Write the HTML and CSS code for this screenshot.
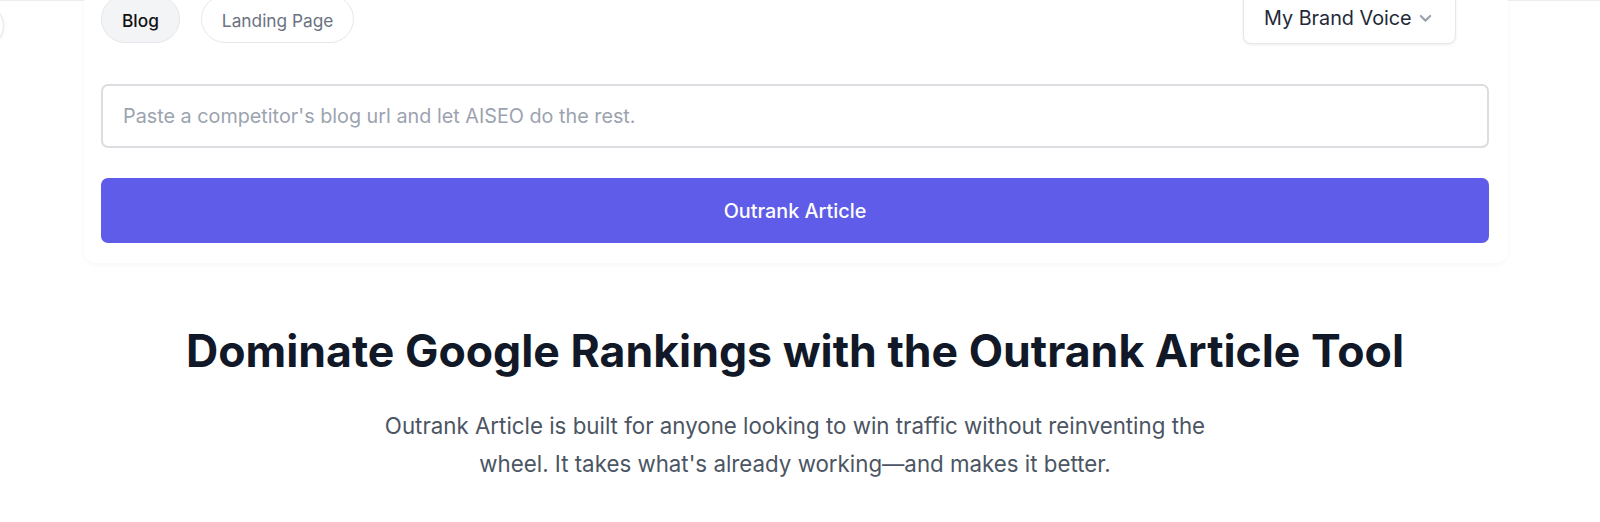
FILE: index.html
```html
<!DOCTYPE html>
<html lang="en">
<head>
<meta charset="utf-8">
<title>Outrank Article</title>
<link rel="stylesheet" href="styles.css">
</head>
<body>
<div class="page">
  <div class="side-btn"></div>
  <section class="card">
    <div class="tabs-row">
      <div class="tabs">
        <button class="pill pill-active">Blog</button>
        <button class="pill">Landing Page</button>
      </div>
      <button class="brand">
        <span>My Brand Voice</span>
        <svg class="chev" width="13" height="9" viewBox="0 0 13 9"><path d="M1.8 2 L6.5 6.6 L11.2 2" fill="none" stroke="#9ca3af" stroke-width="2.2" stroke-linecap="round" stroke-linejoin="round"/></svg>
      </button>
    </div>
    <div class="url-input">Paste a competitor's blog url and let AISEO do the rest.</div>
    <button class="cta">Outrank Article</button>
  </section>
  <section class="intro">
    <h1>Dominate Google Rankings with the Outrank Article Tool</h1>
    <p>Outrank Article is built for anyone looking to win traffic without reinventing the wheel. It takes what's already working—and makes it better.</p>
  </section>
</div>
</body>
</html>
```

FILE: styles.css
```css
* { box-sizing: border-box; }
html, body { margin: 0; padding: 0; background: #fff; }
body {
  font-family: Inter, "Noto Sans", sans-serif;
  color: #111827;
  width: 1600px;
  height: 522px;
  overflow: hidden;
}
.page {
  position: relative;
  border-top: 1px solid #ececee;
}
.side-btn {
  position: absolute;
  left: -38px;
  top: 4px;
  width: 42px;
  height: 42px;
  border-radius: 50%;
  background: #fff;
  border: 1px solid #e5e7eb;
  box-shadow: 0 1px 4px rgba(0,0,0,0.06);
}
.card {
  margin: -11px 0 0 84px;
  width: 1424px;
  padding: 0 19px 20px 17px;
  border-radius: 12px;
  background: #fff;
  box-shadow: 0 2px 6px rgba(0,0,0,0.035);
}
.tabs-row {
  display: flex;
  justify-content: space-between;
  align-items: flex-start;
}
.tabs {
  display: flex;
  gap: 21px;
  margin-top: 5px;
}
.pill {
  height: 48px;
  padding: 2px 20px 0;
  border-radius: 24px;
  border: 1px solid #e5e7eb;
  background: #fff;
  font-family: inherit;
  font-size: 17.3px;
  font-weight: 400;
  color: #6b7280;
}
.pill-active {
  background: #f3f4f6;
  color: #111;
  font-weight: 500;
}
.brand {
  display: flex;
  align-items: center;
  gap: 7px;
  height: 54px;
  width: 213px;
  margin-right: 33px;
  padding: 2px 0 0 20px;
  border: 1px solid #e5e7eb;
  border-radius: 8px;
  background: #fff;
  box-shadow: 0 1px 3px rgba(0,0,0,0.08);
  font-family: inherit;
  font-size: 19.8px;
  color: #1f2937;
}
.chev { margin-top: 1px; }
.url-input {
  margin-top: 40px;
  height: 64px;
  border: 2px solid #dcdde0;
  border-radius: 7px;
  padding: 0 20px;
  display: flex;
  align-items: center;
  font-size: 19.8px;
  color: #9ca3af;
}
.cta {
  display: block;
  width: 100%;
  margin-top: 30px;
  height: 65px;
  border: none;
  border-radius: 7px;
  background: #5e5ce8;
  color: #fff;
  font-family: inherit;
  font-size: 19.8px;
  font-weight: 500;
}
.intro {
  width: 1590px;
  text-align: center;
  padding-top: 61px;
}
.intro h1 {
  margin: 0;
  font-size: 44.6px;
  line-height: 54px;
  font-weight: 700;
  color: #111827;
}
.intro p {
  margin: 29px auto 0;
  width: 850px;
  font-size: 22.3px;
  line-height: 38px;
  color: #4b5563;
}
```
